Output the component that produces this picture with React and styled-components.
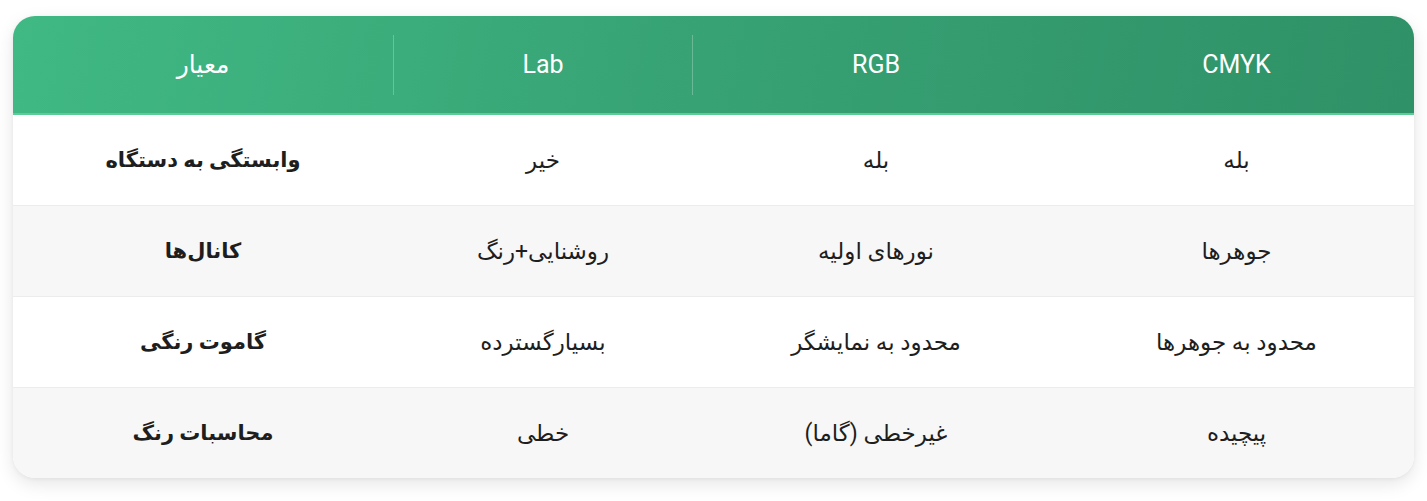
import React from 'react';
import styled, { createGlobalStyle } from 'styled-components';

const columns = ['CMYK', 'RGB', 'Lab', 'معیار'];

const rows = [
  ['بله', 'بله', 'خیر', 'وابستگی به دستگاه'],
  ['جوهرها', 'نورهای اولیه', 'روشنایی+رنگ', 'کانال‌ها'],
  ['محدود به جوهرها', 'محدود به نمایشگر', 'بسیارگسترده', 'گاموت رنگی'],
  ['پیچیده', 'غیرخطی (گاما)', 'خطی', 'محاسبات رنگ'],
];

const App = () => {
  return (
    <>
      <GlobalStyle />
      <Page>
        <Card dir="rtl">
          <HeaderRow>
            {columns.map((col, i) => (
              <HeadCell key={col} $divided={i === 2}>
                {col}
              </HeadCell>
            ))}
          </HeaderRow>
          {rows.map((row, r) => (
            <BodyRow key={r} $striped={r % 2 === 1} $last={r === rows.length - 1}>
              {row.map((cell, i) => (
                <Cell key={i} $label={i === row.length - 1}>
                  {cell}
                </Cell>
              ))}
            </BodyRow>
          ))}
        </Card>
      </Page>
    </>
  );
};

export default App;

const GlobalStyle = createGlobalStyle`
  body {
    margin: 0;
    background: #ffffff;
    font-family: Roboto, "DejaVu Sans", sans-serif;
  }
`;

const Page = styled.div`
  padding: 16px 13px 23px 13px;
`;

const Card = styled.div`
  border-radius: 22px;
  overflow: hidden;
  background: #fff;
  box-shadow: 0 6px 18px rgba(0, 0, 0, 0.1), 0 1px 4px rgba(0, 0, 0, 0.05);
`;

const grid = `
  display: grid;
  grid-template-columns: 355px 366px 300px 1fr;
`;

const HeaderRow = styled.div`
  ${grid}
  height: 97px;
  align-items: center;
  background: linear-gradient(100deg, #40b984 0%, #37a274 50%, #2f9167 100%);
  border-bottom: 2px solid #5ccd97;
`;

const HeadCell = styled.div`
  height: 60px;
  display: flex;
  align-items: center;
  justify-content: center;
  color: #fff;
  font-size: 25px;
  font-weight: 400;
  border-left: ${(p) => (p.$divided ? '1px solid rgba(255,255,255,0.25)' : 'none')};
  border-right: ${(p) => (p.$divided ? '1px solid rgba(255,255,255,0.25)' : 'none')};
`;

const BodyRow = styled.div`
  ${grid}
  height: 90px;
  background: ${(p) => (p.$striped ? '#f7f7f7' : '#ffffff')};
  border-bottom: ${(p) => (p.$last ? 'none' : '1px solid #ececec')};
`;

const Cell = styled.div`
  display: flex;
  align-items: center;
  justify-content: center;
  color: #1e1e1e;
  font-size: ${(p) => (p.$label ? '21px' : '23px')};
  font-weight: ${(p) => (p.$label ? 700 : 400)};
`;
